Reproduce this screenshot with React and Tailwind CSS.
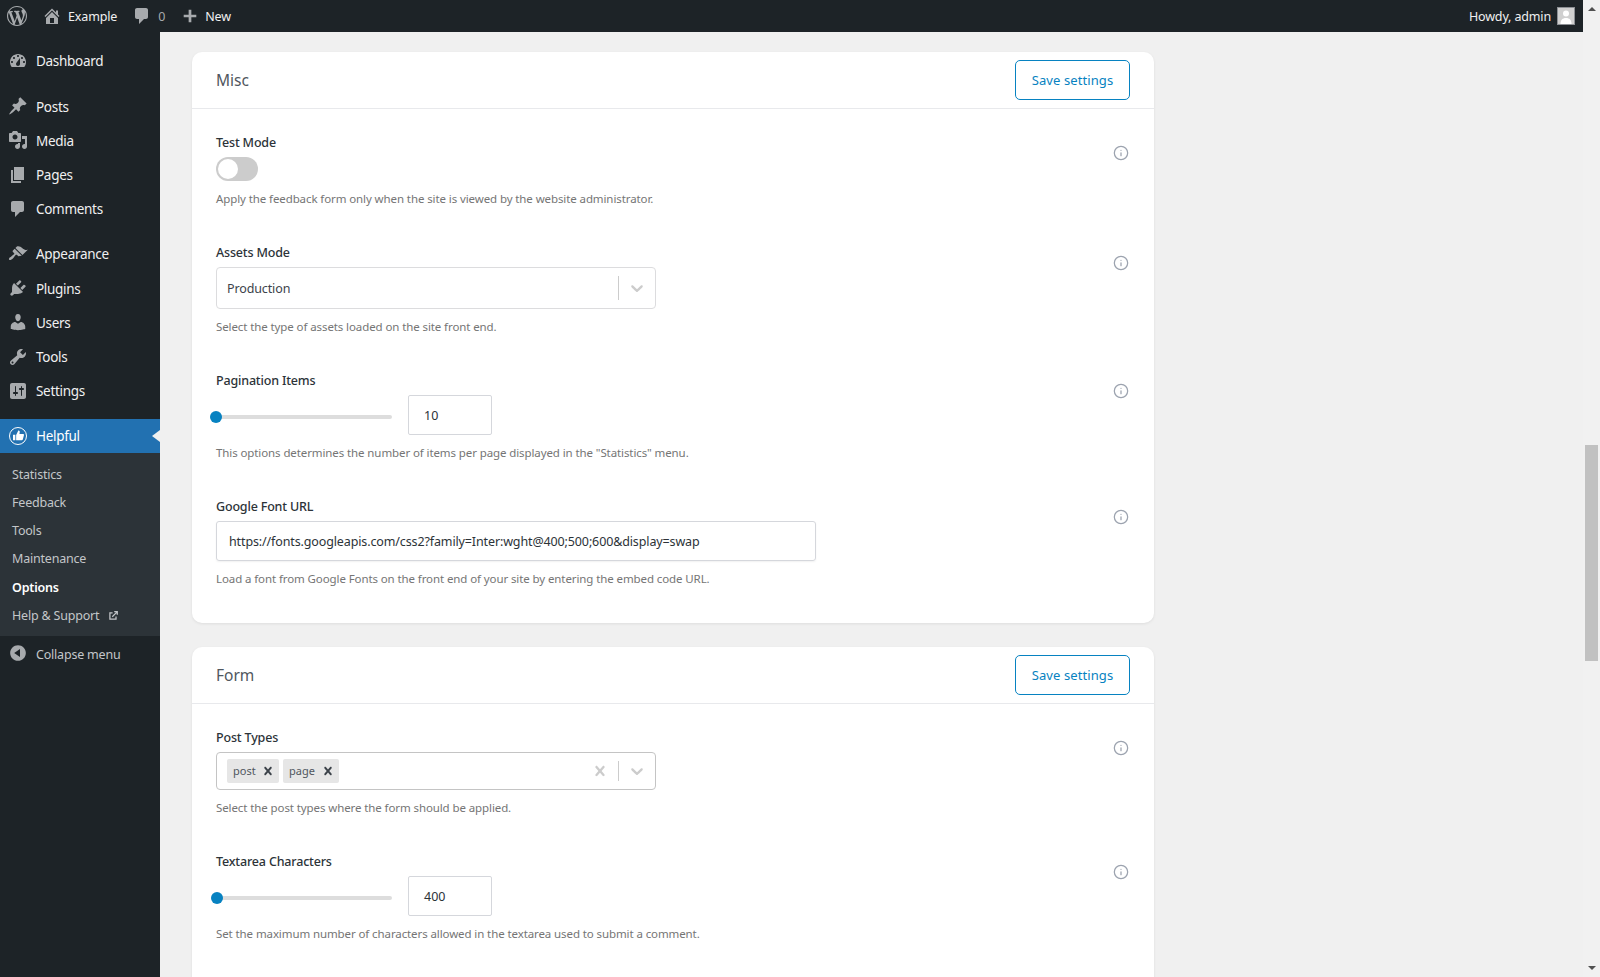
import React from "react";
import { Info } from "lucide-react";

const P = {
  wp: "M20 10c0-5.51-4.49-10-10-10C4.48 0 0 4.49 0 10c0 5.52 4.48 10 10 10 5.51 0 10-4.48 10-10zM7.78 15.37L4.37 6.22c.55-.02 1.17-.08 1.17-.08.5-.06.44-1.13-.06-1.11 0 0-1.45.11-2.37.11-.18 0-.37 0-.58-.01C4.12 2.69 6.87 1.11 10 1.11c2.33 0 4.45.87 6.05 2.34-.68-.11-1.65.39-1.65 1.58 0 .74.45 1.36.9 2.1.35.61.55 1.36.55 2.46 0 1.49-1.4 5-1.4 5l-3.03-8.37c.54-.02.82-.17.82-.17.5-.05.44-1.25-.06-1.22 0 0-1.44.12-2.38.12-.87 0-2.33-.12-2.33-.12-.5-.03-.56 1.2-.06 1.22l.92.08 1.26 3.41zM17.41 10c.24-.64.74-1.87.43-4.25.7 1.29 1.05 2.71 1.05 4.25 0 3.29-1.73 6.24-4.4 7.78.97-2.59 1.94-5.2 2.92-7.78zM6.1 18.09C3.12 16.65 1.11 13.53 1.11 10c0-1.3.23-2.48.72-3.59C3.25 10.3 4.67 14.2 6.1 18.09zm4.03-6.63l2.58 6.98c-.86.29-1.76.45-2.71.45-.79 0-1.57-.11-2.29-.33.81-2.38 1.62-4.74 2.42-7.1z",
  home: "M16 8.5l1.53 1.53-1.06 1.06L10 4.62l-6.47 6.47-1.06-1.06L10 2.5l4 4v-2h2v4zm-6-2.46l6 5.99V18H4v-5.97zM12 17v-5H8v5h4z",
  comment: "M5 2h9c1.1 0 2 .9 2 2v7c0 1.1-.9 2-2 2h-2l-5 5v-5H5c-1.1 0-2-.9-2-2V4c0-1.1.9-2 2-2z",
  plus: "M17 8.5v3h-5.5V17h-3v-5.5H3v-3h5.5V3h3v5.5z",
  dashboard: "M3.76 16h12.48c1.1-1.37 1.76-3.11 1.76-5 0-4.42-3.58-8-8-8s-8 3.58-8 8c0 1.89.66 3.63 1.76 5zM10 4c.55 0 1 .45 1 1s-.45 1-1 1-1-.45-1-1 .45-1 1-1zM6 6c.55 0 1 .45 1 1s-.45 1-1 1-1-.45-1-1 .45-1 1-1zm8 0c.55 0 1 .45 1 1s-.45 1-1 1-1-.45-1-1 .45-1 1-1zm-5.37 5.55L12 7v6c0 1.1-.9 2-2 2s-2-.9-2-2c0-.57.24-1.08.63-1.45zM4 10c.55 0 1 .45 1 1s-.45 1-1 1-1-.45-1-1 .45-1 1-1zm12 0c.55 0 1 .45 1 1s-.45 1-1 1-1-.45-1-1 .45-1 1-1z",
  post: "M10.44 3.02l1.82-1.82 6.36 6.35-1.83 1.82c-1.05-.68-2.48-.57-3.41.36l-.75.75c-.92.93-1.04 2.35-.35 3.41l-1.83 1.82-2.41-2.41-2.8 2.79c-.42.42-3.38 2.71-3.8 2.29s1.86-3.39 2.28-3.81l2.79-2.79L4.1 9.36l1.83-1.82c1.05.69 2.48.57 3.4-.36l.75-.75c.93-.92 1.05-2.35.36-3.41z",
  media: "M13 11V4c0-.55-.45-1-1-1h-1.67L9 1H5L3.67 3H2c-.55 0-1 .45-1 1v7c0 .55.45 1 1 1h10c.55 0 1-.45 1-1zM7 4.5c1.38 0 2.5 1.12 2.5 2.5S8.38 9.5 7 9.5 4.5 8.38 4.5 7 5.62 4.5 7 4.5zM14 6h5v10.5c0 1.38-1.12 2.5-2.5 2.5S14 17.88 14 16.5s1.12-2.5 2.5-2.5c.17 0 .34.02.5.05V9h-3V6zm-4 8.05V13h2v3.5c0 1.38-1.12 2.5-2.5 2.5S7 17.88 7 16.5 8.12 14 9.5 14c.17 0 .34.02.5.05z",
  page: "M6 15V2h10v13H6zm-1 1h8v2H3V5h2v11z",
  appearance: "M14.48 11.06L7.41 3.99l1.5-1.5c.5-.56 2.3-.47 3.51.32 1.21.8 1.43 1.28 2.91 2.1 1.18.64 2.45 1.26 4.45.85zm-.71.71L6.7 4.7 4.93 6.47c-.39.39-.39 1.02 0 1.41l1.06 1.06c.39.39.39 1.03 0 1.42-.6.6-1.43 1.11-2.21 1.69-.35.26-.7.53-1.01.84C1.43 13.23.4 14.98 1.2 15.8c.82.8 2.57-.23 3.91-1.57.31-.31.58-.66.85-1.02.57-.78 1.08-1.61 1.69-2.21.39-.39 1.02-.39 1.41 0l1.06 1.06c.39.39 1.02.39 1.41 0z",
  plugins: "M13.11 4.36L9.87 7.6 8 5.73l3.24-3.24c.35-.34 1.05-.2 1.56.32.52.51.66 1.21.31 1.55zm-8 1.77l.91-1.12 9.01 9.01-1.19.84c-.71.71-2.63 1.16-3.82 1.16H6.14L4.9 17.26c-.59.59-1.54.59-2.12 0-.59-.58-.59-1.53 0-2.12l1.24-1.24v-3.88c0-1.13.4-3.19 1.09-3.89zm7.26 3.97l3.24-3.24c.34-.35 1.04-.21 1.55.31.52.51.66 1.21.31 1.55l-3.24 3.25z",
  users: "M10 9.25c-2.27 0-2.73-3.44-2.73-3.44C7 4.02 7.82 2 9.97 2c2.16 0 2.98 2.02 2.71 3.81 0 0-.41 3.44-2.68 3.44zm0 2.57L12.72 10c2.39 0 4.52 2.33 4.52 4.53v2.49s-3.65 1.13-7.24 1.13c-3.65 0-7.24-1.13-7.24-1.13v-2.49c0-2.25 1.94-4.48 4.47-4.48z",
  tools: "M16.68 9.77c-1.34 1.34-3.3 1.67-4.95.99l-5.41 6.52c-.99.99-2.59.99-3.58 0s-.99-2.59 0-3.57l6.52-5.42c-.68-1.65-.35-3.61.99-4.95 1.28-1.28 3.12-1.62 4.72-1.06l-2.89 2.89 2.82 2.82 2.86-2.87c.53 1.58.18 3.39-1.08 4.65zM3.81 16.21c.4.39 1.04.39 1.43 0 .4-.4.4-1.04 0-1.43-.39-.4-1.03-.4-1.43 0-.39.39-.39 1.03 0 1.43z",
  settings: "M18 16V4c0-1.1-.9-2-2-2H4c-1.1 0-2 .9-2 2v12c0 1.1.9 2 2 2h12c1.1 0 2-.9 2-2zM8 11h1c.55 0 1 .45 1 1s-.45 1-1 1H8v1.5c0 .28-.22.5-.5.5s-.5-.22-.5-.5V13H6c-.55 0-1-.45-1-1s.45-1 1-1h1V5.5c0-.28.22-.5.5-.5s.5.22.5.5V11zm5-2h-1c-.55 0-1-.45-1-1s.45-1 1-1h1V5.5c0-.28.22-.5.5-.5s.5.22.5.5V7h1c.55 0 1 .45 1 1s-.45 1-1 1h-1v5.5c0 .28-.22.5-.5.5s-.5-.22-.5-.5V9z",
  collapse: "M10 2.16c4.33 0 7.84 3.51 7.84 7.84s-3.51 7.84-7.84 7.84S2.16 14.33 2.16 10 5.71 2.16 10 2.16zm2 11.72V6.12L6.18 9.97z",
  chevron: "M4.516 7.548c0.436-0.446 1.043-0.481 1.576 0l3.908 3.747 3.908-3.747c0.533-0.481 1.141-0.446 1.576 0 0.436 0.445 0.408 1.197 0 1.615-0.406 0.418-4.695 4.502-4.695 4.502-0.217 0.223-0.502 0.335-0.789 0.335s-0.572-0.112-0.789-0.335c0 0-4.287-4.084-4.695-4.502s-0.436-1.17 0-1.615z",
  cross: "M14.348 14.849c-0.469 0.469-1.229 0.469-1.697 0l-2.651-3.03-2.651 3.029c-0.469 0.469-1.229 0.469-1.697 0-0.469-0.469-0.469-1.229 0-1.697l2.758-3.15-2.759-3.152c-0.469-0.469-0.469-1.228 0-1.697s1.228-0.469 1.697 0l2.652 3.031 2.651-3.031c0.469-0.469 1.228-0.469 1.697 0s0.469 1.229 0 1.697l-2.758 3.152 2.758 3.15c0.469 0.469 0.469 1.229 0 1.698z",
};

function Ico({ d, className }) {
  return (
    <svg viewBox="0 0 20 20" className={className} fill="currentColor" fillRule="evenodd" aria-hidden="true">
      <path d={d} />
    </svg>
  );
}

function AdminBar() {
  return (
    <div className="h-8 shrink-0 bg-[#1d2327] flex items-center text-[12.5px] text-[#f0f0f1] tracking-[-0.15px]">
      <Ico d={P.wp} className="w-5 h-5 ml-[7px] text-[#a7aaad]" />
      <Ico d={P.home} className="w-5 h-5 ml-[15px] text-[#a7aaad]" />
      <span className="ml-[6px] pt-[3px]">Example</span>
      <Ico d={P.comment} className="w-5 h-5 ml-[15px] text-[#a7aaad]" />
      <span className="ml-[6px] pt-[3px] text-[#a7aaad]">0</span>
      <Ico d={P.plus} className="w-[18px] h-[18px] ml-4 text-[#a7aaad]" />
      <span className="ml-[6px] pt-[3px]">New</span>
      <span className="ml-auto pt-[3px]">Howdy, admin</span>
      <div className="ml-[6px] mr-2 w-[18px] h-[18px] bg-[#d0d0d0] border border-[#8c8f94] overflow-hidden flex items-end justify-center">
        <svg viewBox="0 0 16 16" className="w-4 h-4 text-white" fill="currentColor" aria-hidden="true">
          <circle cx="8" cy="5.5" r="3" />
          <path d="M2.5 16c0-4 2-6 5.500-6s5.500 2 5.500 6z" />
        </svg>
      </div>
    </div>
  );
}

function MenuItem({ icon, label, active }) {
  return (
    <div className={`relative h-[34.2px] flex items-center text-[13.5px] tracking-[-0.3px] ${active ? "bg-[#2271b1] text-white" : "text-[#f0f0f1]"}`}>
      <span className="w-9 flex justify-center">{icon}</span>
      <span className="pt-px">{label}</span>
      {active && (
        <span className="absolute right-0 top-[11px] w-0 h-0 border-y-[6px] border-y-transparent border-r-[8px] border-r-[#f0f0f0]" />
      )}
    </div>
  );
}

function SubItem({ label, bold, ext }) {
  return (
    <div className={`h-[28.2px] pl-3 flex items-center text-[12.5px] tracking-[-0.2px] ${bold ? "font-semibold text-white" : "text-[#c3c6c9]"}`}>
      <span className="pt-[2px]">{label}</span>
      {ext && (
        <svg viewBox="0 0 10 10" className="w-[9px] h-[9px] ml-[10px] text-[#c3c6c9]" fill="none" stroke="currentColor" strokeWidth="1.4" aria-hidden="true">
          <path d="M4 2.200H1v6.800h6.800V6" />
          <path d="M3.600 6.400L9 1M5.800 .8H9.200V4.200" />
        </svg>
      )}
    </div>
  );
}

function Helpful() {
  return (
    <span className="w-[18px] h-[18px] rounded-full border-[1.5px] border-white flex items-center justify-center">
      <svg viewBox="0 0 14 14" className="w-[11px] h-[11px] text-white" fill="currentColor" aria-hidden="true">
        <path d="M0 6h3v7H0zM4 6.300L6.800.6c1.300 0 2 .9 1.800 2.100L8.200 5H13c.8 0 1.200.8 1 1.500l-1.500 5.600c-.2.600-.7.900-1.300.9H4z" />
      </svg>
    </span>
  );
}

function Sidebar() {
  const ic = "w-5 h-5 text-[#a7aaad]";
  const top1 = [["Posts", P.post], ["Media", P.media], ["Pages", P.page], ["Comments", P.comment]];
  const top2 = [["Appearance", P.appearance], ["Plugins", P.plugins], ["Users", P.users], ["Tools", P.tools], ["Settings", P.settings]];
  return (
    <div className="w-40 shrink-0 bg-[#1d2327] pt-3">
      <MenuItem icon={<Ico d={P.dashboard} className={ic} />} label="Dashboard" />
      <div className="h-[11px]" />
      {top1.map(([l, d]) => <MenuItem key={l} icon={<Ico d={d} className={ic} />} label={l} />)}
      <div className="h-[11px]" />
      {top2.map(([l, d]) => <MenuItem key={l} icon={<Ico d={d} className={ic} />} label={l} />)}
      <div className="h-[11px]" />
      <MenuItem icon={<Helpful />} label="Helpful" active />
      <div className="bg-[#2c3338] py-[7px]">
        <SubItem label="Statistics" />
        <SubItem label="Feedback" />
        <SubItem label="Tools" />
        <SubItem label="Maintenance" />
        <SubItem label="Options" bold />
        <SubItem label="Help & Support" ext />
      </div>
      <div className="h-[34px] flex items-center text-[12.5px] tracking-[-0.2px] text-[#c3c6c9]">
        <span className="w-9 flex justify-center"><Ico d={P.collapse} className={ic} /></span>
        <span className="pt-1">Collapse menu</span>
      </div>
    </div>
  );
}

function Row({ label, desc, children, last }) {
  return (
    <div className={`flex justify-between ${last ? "" : "pb-[33px]"}`}>
      <div>
        <div className="h-5 pt-px leading-5 text-[12.5px] font-medium text-[#2c3338] tracking-[-0.17px]">{label}</div>
        <div className="mt-[5px]">{children}</div>
        <div className="mt-2 h-5 leading-5 text-[11.5px] text-[#757575] tracking-[-0.1px]">{desc}</div>
      </div>
      <Info className="w-4 h-4 mt-[13px] mr-[1px] text-[#9ca3af]" strokeWidth={1.9} />
    </div>
  );
}

function Toggle() {
  return (
    <div className="w-[42px] h-6 rounded-full bg-[#cccccc] p-[2px]">
      <div className="w-5 h-5 rounded-full bg-white" />
    </div>
  );
}

function SelectTail({ clear }) {
  return (
    <div className="ml-auto flex items-center">
      {clear && <Ico d={P.cross} className="w-5 h-5 text-[#cccccc] mr-2" />}
      <div className={`w-px bg-[#cccccc] ${clear ? "h-5" : "h-6"}`} />
      <div className="w-9 flex justify-center">
        <Ico d={P.chevron} className="w-5 h-5 text-[#cccccc]" />
      </div>
    </div>
  );
}

function Chip({ label, w }) {
  return (
    <div className={`h-6 rounded-[2px] bg-[#e6e6e6] flex items-center pl-[6px] text-[11px] text-[#50575e] ${w}`}>
      <span>{label}</span>
      <Ico d={P.cross} className="w-4 h-4 text-[#3c434a] ml-auto mr-[3px]" />
    </div>
  );
}

function Slider({ num, offset }) {
  return (
    <div className="flex items-center">
      <div className="relative w-[176px] h-1 rounded-full bg-[#dddddd] mt-1">
        <div className={`absolute top-[-4px] w-3 h-3 rounded-full bg-[#0782c1] ${offset}`} />
      </div>
      <div className="ml-4 w-[84px] h-10 rounded-[2px] border border-[#d5d7dc] flex items-center pl-[15px] pt-[3px] text-[12.5px] text-[#2c3338]">{num}</div>
    </div>
  );
}

function Card({ title, className, children }) {
  return (
    <div className={`w-[962px] bg-white rounded-t-[10px] shadow-[0_1px_3px_rgba(0,0,0,0.08)] ${className}`}>
      <div className="h-[57px] px-6 flex items-center justify-between border-b border-[#e8e9ec]">
        <span className="pt-[2px] text-[15.5px] text-[#50575e]">{title}</span>
        <div className="w-[115px] h-10 rounded-[5px] border border-[#0782c1] flex items-center justify-center pt-[2px] text-[13px] text-[#0782c1] tracking-[0.1px]">Save settings</div>
      </div>
      {children}
    </div>
  );
}

function Scrollbar() {
  return (
    <div className="w-[17px] shrink-0 bg-[#f1f1f1] flex flex-col items-center">
      <div className="mt-[7px] w-0 h-0 border-x-[4px] border-x-transparent border-b-[4px] border-b-[#505050]" />
      <div className="mt-[434px] w-[13px] h-[216px] bg-[#c1c1c1]" />
      <div className="mt-auto mb-[7px] w-0 h-0 border-x-[4px] border-x-transparent border-t-[4px] border-t-[#505050]" />
    </div>
  );
}

export default function App() {
  return (
    <div className="w-[1600px] h-[977px] overflow-hidden flex font-['Noto_Sans',sans-serif] bg-[#f0f0f0]">
      <div className="flex-1 min-w-0 flex flex-col">
        <AdminBar />
        <div className="flex-1 flex min-h-0">
          <Sidebar />
          <div className="flex-1 pl-8 pt-5 overflow-hidden">
            <Card title="Misc" className="rounded-b-[10px]">
              <div className="px-6 pt-[23px] pb-[34px]">
                <Row label="Test Mode" desc="Apply the feedback form only when the site is viewed by the website administrator.">
                  <Toggle />
                </Row>
                <Row label="Assets Mode" desc="Select the type of assets loaded on the site front end.">
                  <div className="w-[440px] h-[42px] rounded-[4px] border border-[#dcdcde] flex items-center pl-[10px] text-[12.5px] tracking-[-0.12px] text-[#3c434a]">
                    <span className="pt-[3px]">Production</span>
                    <SelectTail />
                  </div>
                </Row>
                <Row label="Pagination Items" desc={'This options determines the number of items per page displayed in the "Statistics" menu.'}>
                  <Slider num="10" offset="left-[-6px]" />
                </Row>
                <Row last label="Google Font URL" desc="Load a font from Google Fonts on the front end of your site by entering the embed code URL.">
                  <div className="w-[600px] h-10 rounded-[3px] border border-[#d5d7dc] shadow-[0_1px_2px_rgba(0,0,0,0.06)] flex items-center pl-3 pt-[3px] text-[12.5px] tracking-[-0.125px] text-[#2c3338]">https://fonts.googleapis.com/css2?family=Inter:wght@400;500;600&display=swap</div>
                </Row>
              </div>
            </Card>
            <Card title="Form" className="mt-6">
              <div className="px-6 pt-[23px] pb-10">
                <Row label="Post Types" desc="Select the post types where the form should be applied.">
                  <div className="w-[440px] h-[38px] rounded-[4px] border border-[#c4c4c4] flex items-center pl-[10px] gap-1">
                    <Chip label="post" w="w-[52px]" />
                    <Chip label="page" w="w-[56px]" />
                    <SelectTail clear />
                  </div>
                </Row>
                <Row last label="Textarea Characters" desc="Set the maximum number of characters allowed in the textarea used to submit a comment.">
                  <Slider num="400" offset="left-[-5px]" />
                </Row>
              </div>
            </Card>
          </div>
        </div>
      </div>
      <Scrollbar />
    </div>
  );
}
